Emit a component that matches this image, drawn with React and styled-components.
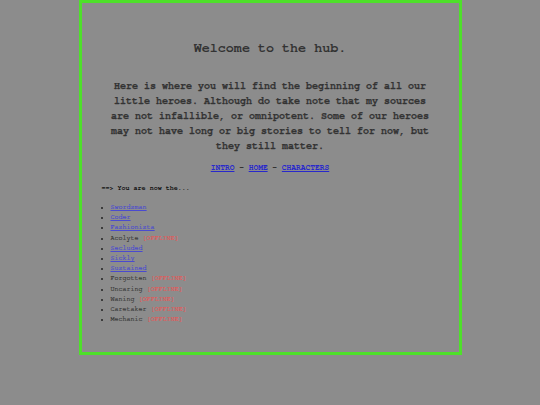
import React from "react";
import styled, { createGlobalStyle } from "styled-components";

const mono = `"Nimbus Mono PS", "Nimbus Mono L", "FreeMono", "Courier", "Liberation Mono", monospace`;

const Global = createGlobalStyle`
  html, body { margin: 0; padding: 0; background: #8c8c8c; }
  body { font-family: ${mono}; color: #333; }
`;

const Page = styled.div`
  width: 540px;
  height: 405px;
  background: #8c8c8c;
  overflow: hidden;
`;

const Hub = styled.div`
  width: 377px;
  margin: 0 auto;
  border: 3px solid #4ee02a;
  padding: 37px 0 28px;
`;

const Title = styled.h1`
  margin: 0;
  font-size: 13.4px;
  line-height: 16px;
  font-weight: bold;
  text-align: center;
  color: #333;
`;

const Intro = styled.p`
  margin: 22.5px auto 0;
  width: 330px;
  font-size: 10px;
  line-height: 15px;
  font-weight: bold;
  text-align: center;
  color: #333;
  -webkit-text-stroke: 0.25px #333;
`;

const Nav = styled.nav`
  margin-top: 8.5px;
  font-size: 7.9px;
  line-height: 12px;
  font-weight: bold;
  text-align: center;
  color: #333;
`;

const NavLink = styled.a`
  color: #2828cc;
  text-decoration: underline;
`;

const Prompt = styled.div`
  margin: 9px 0 0 20px;
  font-size: 6.7px;
  line-height: 10px;
  font-weight: bold;
  color: #111;
`;

const Heroes = styled.ul`
  margin: 9px 0 0 20px;
  padding-left: 9px;
  font-size: 6.7px;
  line-height: 10.2px;
  color: #3a3a3a;
  -webkit-text-stroke: 0.2px currentColor;
  li::marker { color: #222; }
`;

const HeroLink = styled.a`
  color: #4a4ad0;
  text-decoration: underline;
`;

const Offline = styled.span`
  color: #e05a5a;
`;

const heroes = [
  { name: "Swordsman", online: true },
  { name: "Coder", online: true },
  { name: "Fashionista", online: true },
  { name: "Acolyte", online: false },
  { name: "Secluded", online: true },
  { name: "Sickly", online: true },
  { name: "Sustained", online: true },
  { name: "Forgotten", online: false },
  { name: "Uncaring", online: false },
  { name: "Waning", online: false },
  { name: "Caretaker", online: false },
  { name: "Mechanic", online: false },
];

export default function App() {
  return (
    <Page>
      <Global />
      <Hub>
        <Title>Welcome to the hub.</Title>
        <Intro>
          Here is where you will find the beginning of all our little heroes.
          Although do take note that my sources are not infallible, or
          omnipotent. Some of our heroes may not have long or big stories to
          tell for now, but they still matter.
        </Intro>
        <Nav>
          <NavLink href="#">INTRO</NavLink> - <NavLink href="#">HOME</NavLink> -{" "}
          <NavLink href="#">CHARACTERS</NavLink>
        </Nav>
        <Prompt>==&gt; You are now the...</Prompt>
        <Heroes>
          {heroes.map((h) => (
            <li key={h.name}>
              {h.online ? (
                <HeroLink href="#">{h.name}</HeroLink>
              ) : (
                <>
                  {h.name} <Offline>[OFFLINE]</Offline>
                </>
              )}
            </li>
          ))}
        </Heroes>
      </Hub>
    </Page>
  );
}
